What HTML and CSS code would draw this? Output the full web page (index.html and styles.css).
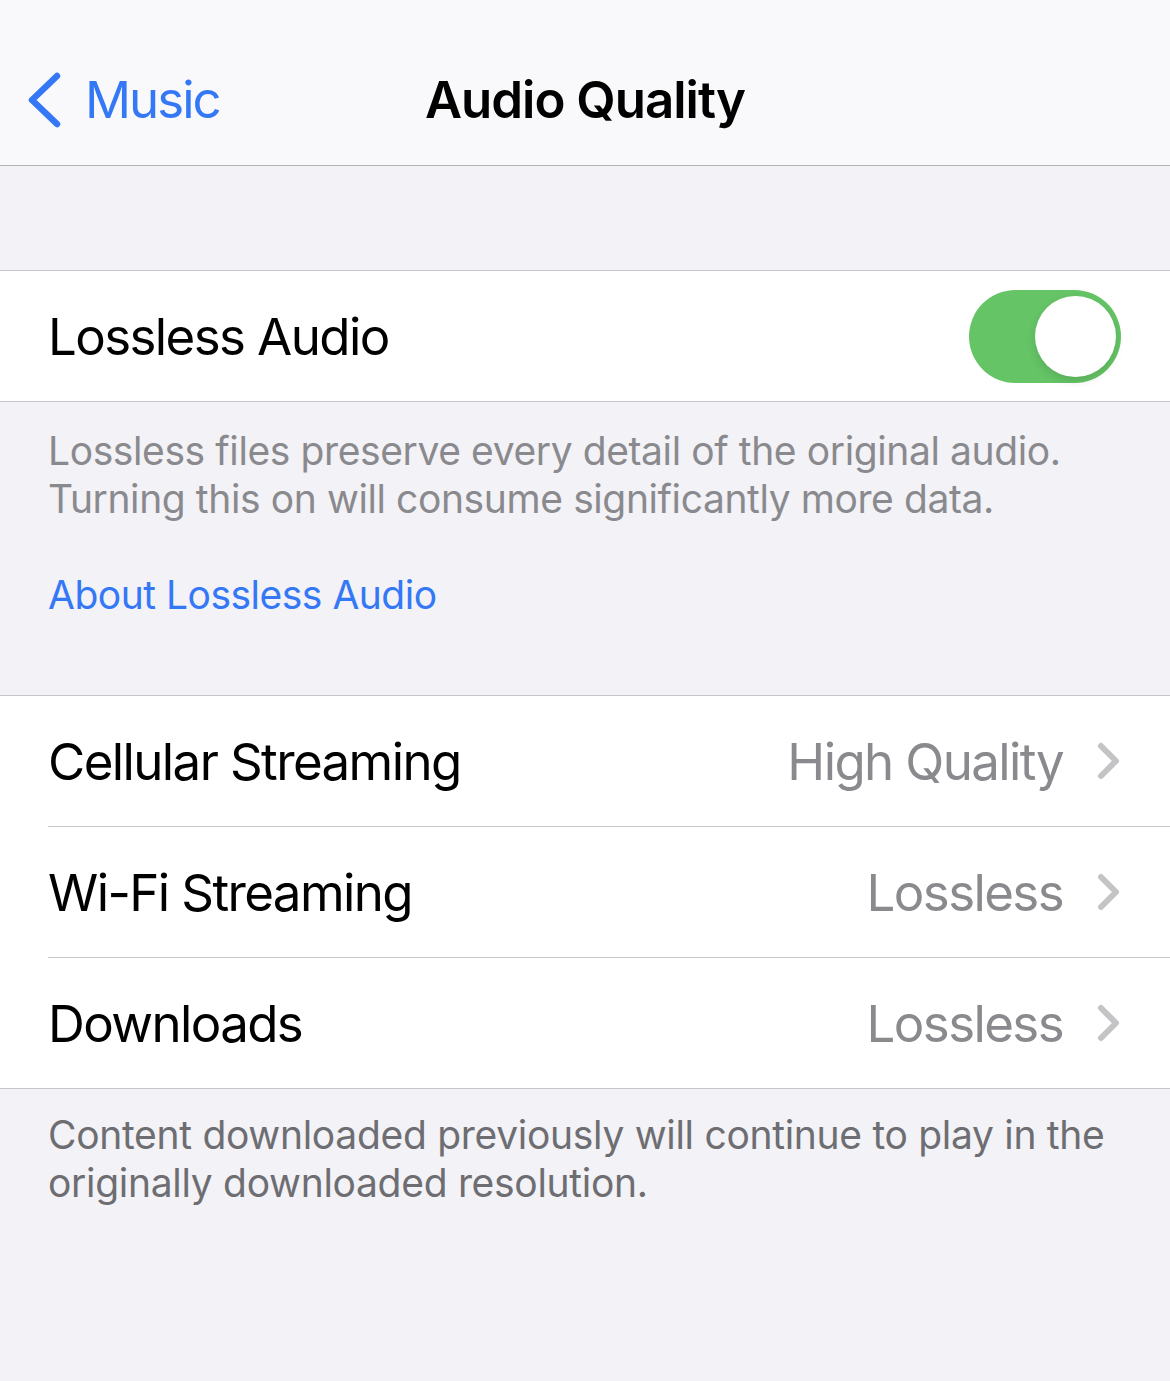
FILE: index.html
```html
<!DOCTYPE html>
<html lang="en">
<head>
  <meta charset="UTF-8">
  <meta name="viewport" content="width=device-width, initial-scale=1.0">
  <title>Audio Quality</title>
  <link rel="stylesheet" href="styles.css">
</head>
<body>
  <header class="nav">
    <a class="back" href="#">
      <svg class="back-icon" width="36" height="56" viewBox="0 0 36 56">
        <path d="M31 4 L6 28 L31 52" fill="none" stroke="#3478f6" stroke-width="6.5" stroke-linecap="round" stroke-linejoin="round"/>
      </svg>
      <span>Music</span>
    </a>
    <h1 class="title">Audio Quality</h1>
    <div></div>
  </header>

  <main class="content">
    <section class="group">
      <div class="row">
        <span class="label">Lossless Audio</span>
        <span class="switch on"><span class="knob"></span></span>
      </div>
    </section>
    <div class="footer first">
      <p>Lossless files preserve every detail of the original audio. Turning this on will consume significantly more data.</p>
      <a class="link" href="#">About Lossless Audio</a>
    </div>

    <section class="group">
      <div class="row">
        <span class="label">Cellular Streaming</span>
        <span class="value">High Quality</span>
        <svg class="chevron" width="24" height="38" viewBox="0 0 24 38"><path d="M4 4 L19 19 L4 34" fill="none" stroke="#c4c4c7" stroke-width="6" stroke-linecap="round" stroke-linejoin="round"/></svg>
      </div>
      <div class="row">
        <span class="label">Wi-Fi Streaming</span>
        <span class="value">Lossless</span>
        <svg class="chevron" width="24" height="38" viewBox="0 0 24 38"><path d="M4 4 L19 19 L4 34" fill="none" stroke="#c4c4c7" stroke-width="6" stroke-linecap="round" stroke-linejoin="round"/></svg>
      </div>
      <div class="row">
        <span class="label">Downloads</span>
        <span class="value">Lossless</span>
        <svg class="chevron" width="24" height="38" viewBox="0 0 24 38"><path d="M4 4 L19 19 L4 34" fill="none" stroke="#c4c4c7" stroke-width="6" stroke-linecap="round" stroke-linejoin="round"/></svg>
      </div>
    </section>
    <div class="footer second">
      <p>Content downloaded previously will continue to play in the originally downloaded resolution.</p>
    </div>
  </main>
</body>
</html>
```

FILE: styles.css
```css
body {
  margin: 0;
  font-family: Inter, "Noto Sans", sans-serif;
  background: #f2f2f7;
  color: #000;
  min-height: 1381px;
}
.nav {
  display: grid;
  grid-template-columns: 1fr auto 1fr;
  align-items: center;
  height: 166px;
  padding-top: 34px;
  background: #f9f9fb;
  border-bottom: 1px solid #b4b4b8;
  box-sizing: border-box;
}
.back {
  display: flex;
  align-items: center;
  gap: 23px;
  padding-left: 26px;
  color: #3478f6;
  text-decoration: none;
  font-size: 51px;
  letter-spacing: -2px;
}
.back-icon {
  display: block;
}
.title {
  margin: 0;
  font-size: 51px;
  font-weight: 600;
  letter-spacing: -1px;
}
.content {
  padding-top: 104px;
}
.group {
  background: #fff;
  border-top: 1px solid #c6c6c8;
  border-bottom: 1px solid #c6c6c8;
}
.row {
  display: flex;
  align-items: center;
  height: 130px;
  margin-left: 48px;
  padding-right: 49px;
  font-size: 51px;
  letter-spacing: -1.6px;
}
.row + .row {
  border-top: 1px solid #c6c6c8;
}
.label {
  flex: 1;
}
.value {
  color: #8a8a8e;
  margin-right: 34px;
}
.chevron {
  display: block;
}
.switch {
  position: relative;
  width: 152px;
  height: 93px;
  border-radius: 47px;
  background: #65c466;
}
.knob {
  position: absolute;
  top: 6px;
  right: 5px;
  width: 81px;
  height: 81px;
  border-radius: 50%;
  background: #fff;
  box-shadow: 0 4px 10px rgba(0,0,0,0.12);
}
.footer {
  padding: 0 48px;
  font-size: 39px;
  line-height: 48px;
  letter-spacing: -0.4px;
}
.footer p {
  margin: 0;
}
.footer.first {
  padding-top: 25px;
  padding-bottom: 76px;
  color: #8a8a8e;
}
.footer.first p {
  margin-bottom: 48px;
}
.link {
  color: #3478f6;
  text-decoration: none;
  letter-spacing: -0.5px;
}
.footer.second {
  padding-top: 22px;
  color: #6d6d72;
  letter-spacing: -0.3px;
}
```
